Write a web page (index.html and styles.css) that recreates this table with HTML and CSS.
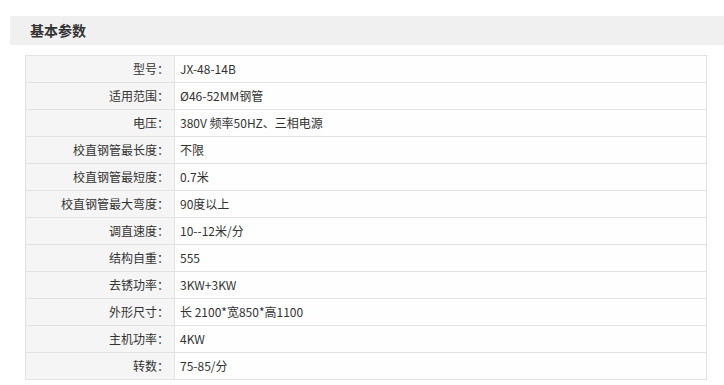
FILE: index.html
```html
<!DOCTYPE html>
<html lang="zh">
<head>
<meta charset="utf-8">
<link rel="stylesheet" href="styles.css">
</head>
<body>
<div class="section-title">基本参数</div>
<table class="params">
  <tr><th>型号：</th><td>JX-48-14B</td></tr>
  <tr><th>适用范围：</th><td>Ø46-52MM钢管</td></tr>
  <tr><th>电压：</th><td>380V 频率50HZ、三相电源</td></tr>
  <tr><th>校直钢管最长度：</th><td>不限</td></tr>
  <tr><th>校直钢管最短度：</th><td>0.7米</td></tr>
  <tr><th>校直钢管最大弯度：</th><td>90度以上</td></tr>
  <tr><th>调直速度：</th><td>10--12米/分</td></tr>
  <tr><th>结构自重：</th><td>555</td></tr>
  <tr><th>去锈功率：</th><td>3KW+3KW</td></tr>
  <tr><th>外形尺寸：</th><td>长 2100*宽850*高1100</td></tr>
  <tr><th>主机功率：</th><td>4KW</td></tr>
  <tr><th>转数：</th><td>75-85/分</td></tr>
</table>
</body>
</html>
```
FILE: styles.css
```css
html, body {
  margin: 0;
  padding: 0;
  background: #fff;
}
body {
  font-family: "Noto Sans CJK SC", "DejaVu Sans", sans-serif;
  font-size: 12px;
  color: #333;
}
.section-title {
  margin: 16px 0 0 10px;
  height: 29px;
  line-height: 29px;
  padding-left: 20px;
  background: #f0f0f0;
  font-size: 14px;
  font-weight: bold;
  color: #333;
}
.params {
  margin: 10px 0 0 25px;
  width: 682px;
  border-collapse: collapse;
  border: 1px solid #e3e3e3;
}
.params th, .params td {
  height: 26px;
  padding: 0;
  border: 1px solid #e3e3e3;
  font-weight: normal;
  line-height: 26px;
  vertical-align: middle;
}
.params th {
  width: 143px;
  padding-right: 5px;
  text-align: right;
  background: #f5f5f5;
}
.params td {
  padding-left: 5px;
  text-align: left;
  background: #fefefe;
}
```
